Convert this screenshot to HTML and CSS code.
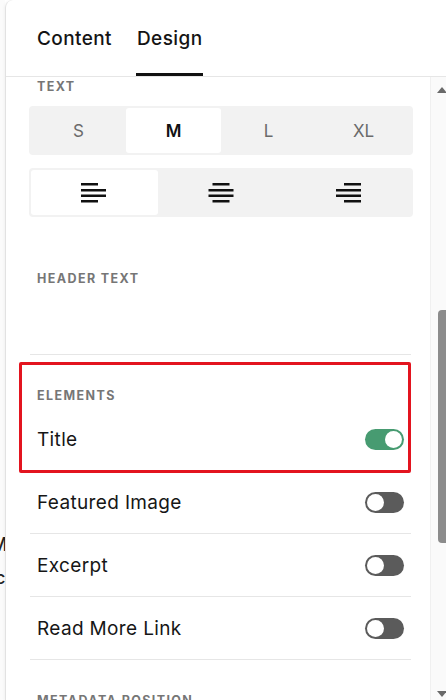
FILE: index.html
```html
<!DOCTYPE html>
<html>
<head>
<meta charset="utf-8">
<link rel="stylesheet" href="styles.css">
</head>
<body>
<div class="page">
  <div class="behind">
    <span class="behind-a">M</span>
    <span class="behind-b">c</span>
  </div>
  <div class="panel">
    <div class="tabs">
      <div class="tab">Content</div>
      <div class="tab active">Design</div>
    </div>
    <div class="body">
      <div class="scroll">
        <div class="label label-text">TEXT</div>
        <div class="seg seg-size">
          <div class="seg-item">S</div>
          <div class="seg-item on">M</div>
          <div class="seg-item">L</div>
          <div class="seg-item">XL</div>
        </div>
        <div class="seg seg-align">
          <div class="seg-item on">
            <svg width="26" height="21" viewBox="0 0 26 21"><g fill="#111"><rect x="0" y="1" width="17" height="2.5"/><rect x="0" y="7" width="25" height="2.5"/><rect x="0" y="12.5" width="25" height="2.5"/><rect x="0" y="18" width="17" height="2.5"/></g></svg>
          </div>
          <div class="seg-item">
            <svg width="26" height="21" viewBox="0 0 26 21"><g fill="#111"><rect x="4.5" y="1" width="17" height="2.5"/><rect x="0.5" y="7" width="25" height="2.5"/><rect x="0.5" y="12.5" width="25" height="2.5"/><rect x="4.5" y="18" width="17" height="2.5"/></g></svg>
          </div>
          <div class="seg-item">
            <svg width="26" height="21" viewBox="0 0 26 21"><g fill="#111"><rect x="9" y="1" width="17" height="2.5"/><rect x="1" y="7" width="25" height="2.5"/><rect x="1" y="12.5" width="25" height="2.5"/><rect x="9" y="18" width="17" height="2.5"/></g></svg>
          </div>
        </div>
        <div class="label label-header">HEADER TEXT</div>
        <div class="divider divider-header"></div>
        <div class="elements">
          <div class="label label-elements">ELEMENTS</div>
          <div class="row row-title">
            <span>Title</span>
            <span class="toggle on"></span>
          </div>
        </div>
        <div class="row bordered">
          <span>Featured Image</span>
          <span class="toggle"></span>
        </div>
        <div class="row bordered">
          <span>Excerpt</span>
          <span class="toggle"></span>
        </div>
        <div class="row bordered">
          <span>Read More Link</span>
          <span class="toggle"></span>
        </div>
        <div class="label label-meta">METADATA POSITION</div>
      </div>
      <div class="scrollbar">
        <div class="arrow arrow-up"></div>
        <div class="thumb"></div>
        <div class="spacer"></div>
        <div class="arrow arrow-down"></div>
      </div>
    </div>
  </div>
</div>
</body>
</html>
```
FILE: styles.css
```css
* { box-sizing: border-box; }
html, body { margin: 0; padding: 0; }
body {
  width: 446px;
  height: 700px;
  overflow: hidden;
  background: #fff;
  font-family: Inter, "Noto Sans", sans-serif;
  color: #141414;
}
.page {
  display: flex;
  height: 700px;
}
.behind {
  width: 5px;
  flex: none;
  overflow: hidden;
  background: #fbfbfb;
  display: flex;
  flex-direction: column;
  font-size: 18px;
  font-weight: 500;
  line-height: 20px;
  color: #222;
}
.behind-a { margin-top: 535px; margin-left: -9px; }
.behind-b { margin-top: 13px; margin-left: -5px; }
.panel {
  flex: 1;
  display: flex;
  flex-direction: column;
  background: #fff;
  border-left: 1px solid #e2e2e2;
  border-top-left-radius: 8px;
  box-shadow: -1px 0 3px rgba(0,0,0,0.04);
  min-width: 0;
}
.tabs {
  height: 77px;
  flex: none;
  display: flex;
  gap: 23px;
  padding-left: 30px;
  border-bottom: 1px solid #e6e6e6;
}
.tab {
  font-size: 19px;
  font-weight: 500;
  letter-spacing: 0.4px;
  display: flex;
  align-items: center;
  padding: 0 1px;
  border-bottom: 3px solid transparent;
  padding-top: 3px;
}
.tab.active { border-bottom-color: #111; }
.body {
  flex: 1;
  display: flex;
  min-height: 0;
}
.scroll {
  flex: 1;
  padding: 2px 17px 0 23px;
  overflow: hidden;
}
.label {
  font-size: 12.5px;
  font-weight: 700;
  letter-spacing: 1.4px;
  color: #767676;
  line-height: 16px;
  padding-left: 8px;
}
.seg {
  display: flex;
  background: #f2f2f2;
  border-radius: 4px;
  padding: 2px;
  height: 49px;
}
.seg-size { margin-top: 11px; }
.seg-align { margin-top: 13px; }
.seg-item {
  flex: 1;
  display: flex;
  align-items: center;
  justify-content: center;
  font-size: 17px;
  color: #6b6b6b;
  border-radius: 3px;
}
.seg-size .seg-item.on {
  color: #111;
  font-weight: 600;
}
.seg-item.on { background: #fff; }
.seg-align .seg-item svg { display: block; }
.label-header { margin-top: 54px; }
.divider {
  height: 1px;
  background: #e6e6e6;
  margin: 0 2px 0 1px;
}
.divider-header { margin-top: 67px; }
.elements {
  position: relative;
  padding-top: 33px;
}
.elements::after {
  content: "";
  position: absolute;
  left: -10px;
  right: 2px;
  top: 7px;
  height: 105px;
  border: 3px solid #e3141f;
  border-radius: 2px;
}
.row {
  height: 63px;
  display: flex;
  align-items: center;
  justify-content: space-between;
  padding: 0 9px 0 8px;
  font-size: 19px;
  letter-spacing: 0.35px;
  color: #161616;
}
.row-title { margin-top: 4px; }
.row.bordered {
  margin: 0 2px 0 1px;
  padding: 0 7px 0 7px;
  border-bottom: 1px solid #e6e6e6;
}
.toggle {
  width: 39px;
  height: 21px;
  border-radius: 11px;
  background: #5b5b5b;
  display: flex;
  align-items: center;
  padding: 2px;
}
.toggle::before {
  content: "";
  width: 17px;
  height: 17px;
  border-radius: 50%;
  background: #fff;
}
.toggle.on {
  background: #479b71;
  justify-content: flex-end;
}
.label-meta { margin-top: 33px; }
.scrollbar {
  width: 16px;
  flex: none;
  display: flex;
  flex-direction: column;
  align-items: flex-end;
  background: #fafafa;
  border-left: 1px solid #f0f0f0;
}
.arrow {
  width: 0;
  height: 0;
  border-left: 5px solid transparent;
  border-right: 5px solid transparent;
  margin-right: -1px;
}
.arrow-up {
  margin-top: 10px;
  border-bottom: 6px solid #6a6a6a;
}
.arrow-down {
  margin-bottom: 3px;
  border-top: 6px solid #6a6a6a;
}
.thumb {
  margin-top: 217px;
  width: 8px;
  height: 233px;
  background: #8c8c8c;
  border-radius: 4px 0 0 4px;
}
.spacer { flex: 1; }
```
